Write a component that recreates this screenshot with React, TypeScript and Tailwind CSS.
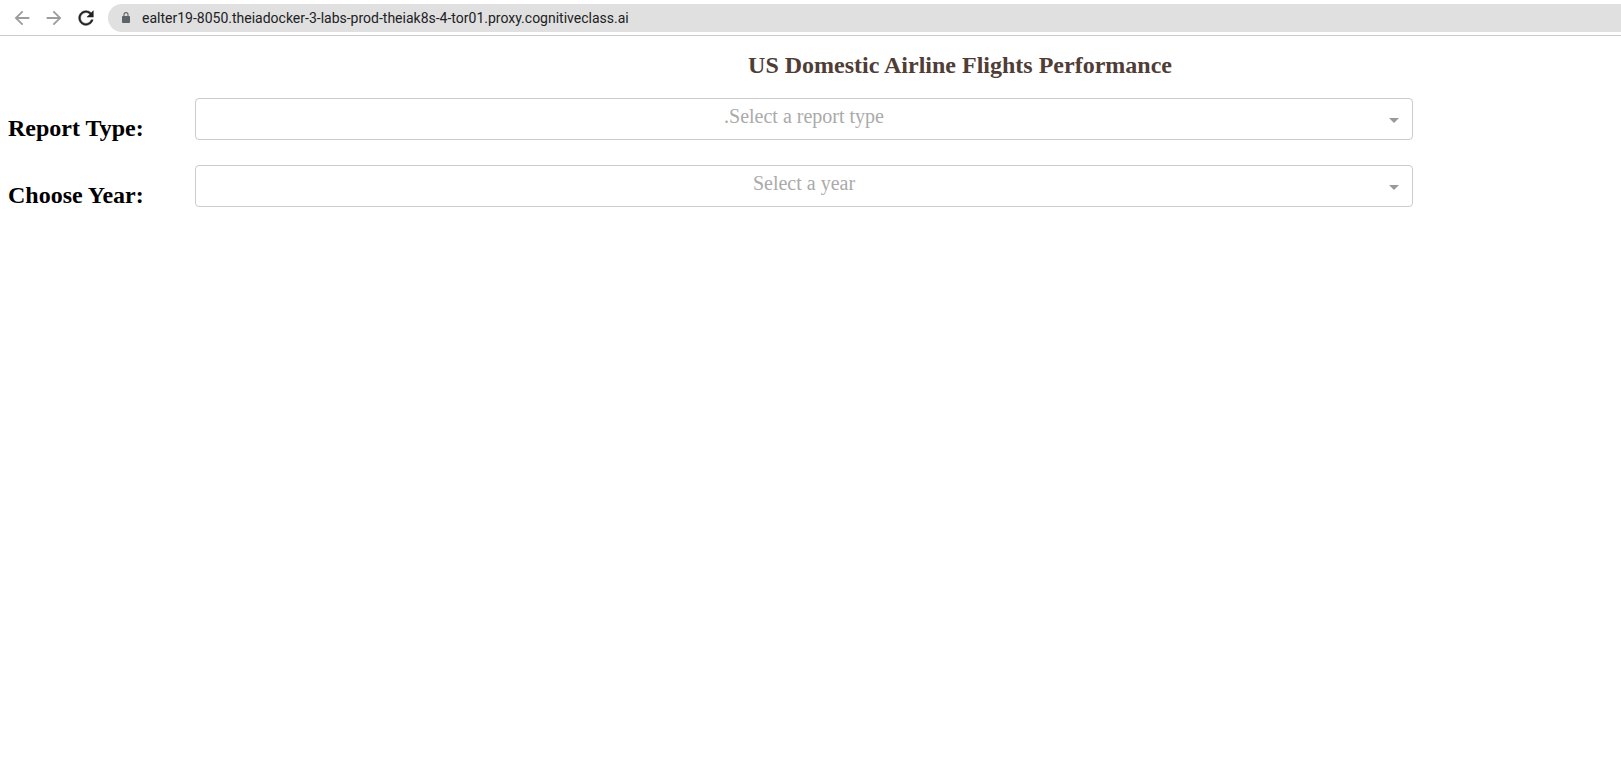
import React, { useState } from "react";
import { MdArrowBack, MdArrowForward } from "react-icons/md";

const ADDRESS = "ealter19-8050.theiadocker-3-labs-prod-theiak8s-4-tor01.proxy.cognitiveclass.ai";

function ReloadIcon() {
  return (
    <svg viewBox="0 0 24 24" width="22" height="22" fill="currentColor" stroke="currentColor" strokeWidth="0.5" aria-hidden="true">
      <path d="M17.65 6.35A7.958 7.958 0 0 0 12 4c-4.42 0-7.99 3.58-7.99 8s3.57 8 7.99 8c3.73 0 6.84-2.55 7.73-6h-2.08A5.99 5.99 0 0 1 12 18c-3.31 0-6-2.69-6-6s2.69-6 6-6c1.66 0 3.14.69 4.22 1.78L13 11h7V4l-2.35 2.35z" />
    </svg>
  );
}

function LockIcon() {
  return (
    <svg viewBox="0 0 8 11" width="8" height="11" fill="none" className="shrink-0 text-[#5f6368]" aria-hidden="true">
      <rect x="0" y="4" width="8" height="7" rx="0.8" fill="currentColor" />
      <path d="M2 4.5V2.6a2 2 0 0 1 4 0v1.9" stroke="currentColor" strokeWidth="1.1" />
    </svg>
  );
}

function BrowserBar() {
  const [address, setAddress] = useState(ADDRESS);
  return (
    <header className="flex h-9 items-center border-b border-[#cacccf] bg-white pl-[11px]">
      <nav className="flex items-center gap-[10px]" aria-label="Browser navigation">
        <button type="button" aria-label="Back" className="text-[#9c9c9f]">
          <MdArrowBack size={22} />
        </button>
        <button type="button" aria-label="Forward" className="text-[#9c9c9f]">
          <MdArrowForward size={22} />
        </button>
        <button type="button" aria-label="Reload" className="text-[#202124]">
          <ReloadIcon />
        </button>
      </nav>
      <div className="ml-[11px] flex h-7 flex-1 items-center gap-3 rounded-l-full bg-[#e0e0e0] pl-[14px]">
        <LockIcon />
        <input
          aria-label="Address"
          value={address}
          onChange={(e) => setAddress(e.target.value)}
          className="min-w-0 flex-1 bg-transparent font-['Roboto',sans-serif] text-sm text-[#202124] outline-none"
        />
      </div>
    </header>
  );
}

interface DropdownProps {
  id: string;
  label: string;
  placeholder: string;
  options: string[];
}

function Dropdown({ id, label, placeholder, options }: DropdownProps) {
  const [value, setValue] = useState("");
  return (
    <div className="flex items-start">
      <label htmlFor={id} className="w-[187px] shrink-0 pt-[14px] text-2xl font-bold text-black">
        {label}
      </label>
      <div className="grid min-w-0 flex-1">
        <select
          id={id}
          value={value}
          onChange={(e) => setValue(e.target.value)}
          className="col-start-1 row-start-1 h-[42px] w-full appearance-none rounded border border-[#cccccc] bg-white pb-[6px] text-center text-xl text-[#aaaaaa] outline-none"
        >
          <option value="" disabled>
            {placeholder}
          </option>
          {options.map((option) => (
            <option key={option} value={option}>
              {option}
            </option>
          ))}
        </select>
        <svg
          viewBox="0 0 10 5"
          className="pointer-events-none col-start-1 row-start-1 mt-[3px] mr-[14px] h-[5px] w-[10px] self-center justify-self-end fill-[#999999]"
          aria-hidden="true"
        >
          <path d="M0 0h10L5 5z" />
        </svg>
      </div>
    </div>
  );
}

export default function App() {
  return (
    <div className="min-h-screen overflow-x-hidden bg-white font-['Liberation_Serif',serif]">
      <BrowserBar />
      <main className="pt-[13px]">
        <h1 className="pl-[299px] text-center text-2xl font-bold text-[#503d36]">
          US Domestic Airline Flights Performance
        </h1>
        <form className="mt-[17px] mr-52 ml-2 flex flex-col gap-[21px]">
          <Dropdown
            id="report-type"
            label="Report Type:"
            placeholder=".Select a report type"
            options={["Yearly Airline Performance Report", "Yearly Airline Delay Report"]}
          />
          <Dropdown
            id="year"
            label="Choose Year:"
            placeholder="Select a year"
            options={Array.from({ length: 16 }, (_, i) => String(2005 + i))}
          />
        </form>
      </main>
    </div>
  );
}
